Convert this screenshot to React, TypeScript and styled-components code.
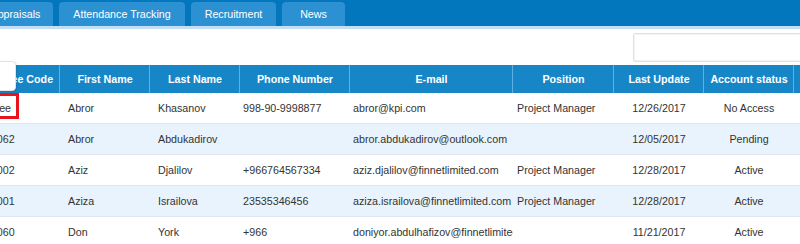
import styled, { createGlobalStyle } from 'styled-components'

const GlobalStyle = createGlobalStyle`
  html, body {
    margin: 0;
    padding: 0;
    background: #ffffff;
    overflow: hidden;
  }
  body {
    font-family: "Liberation Sans", Arial, sans-serif;
  }
`

type Column = {
  title: string
  width: number
  align: 'left' | 'center'
  pad: number
}

const columns: Column[] = [
  { title: 'Employee Code', width: 94, align: 'left', pad: 7 },
  { title: 'First Name', width: 90, align: 'left', pad: 8 },
  { title: 'Last Name', width: 90, align: 'left', pad: 8 },
  { title: 'Phone Number', width: 110, align: 'left', pad: 3 },
  { title: 'E-mail', width: 163, align: 'left', pad: 3 },
  { title: 'Position', width: 101, align: 'left', pad: 4 },
  { title: 'Last Update', width: 90, align: 'center', pad: 0 },
  { title: 'Account status', width: 90, align: 'center', pad: 0 },
  { title: '', width: 106, align: 'center', pad: 0 },
]

const rows = [
  ['Referee', 'Abror', 'Khasanov', '998-90-9998877', 'abror@kpi.com', 'Project Manager', '12/26/2017', 'No Access', ''],
  ['0000062', 'Abror', 'Abdukadirov', '', 'abror.abdukadirov@outlook.com', '', '12/05/2017', 'Pending', ''],
  ['0000002', 'Aziz', 'Djalilov', '+966764567334', 'aziz.djalilov@finnetlimited.com', 'Project Manager', '12/28/2017', 'Active', ''],
  ['0000001', 'Aziza', 'Israilova', '23535346456', 'aziza.israilova@finnetlimited.com', 'Project Manager', '12/28/2017', 'Active', ''],
  ['0000060', 'Don', 'York', '+966', 'doniyor.abdulhafizov@finnetlimited.com', '', '11/21/2017', 'Active', ''],
]

const tabs = [
  { label: 'Appraisals', width: 75 },
  { label: 'Attendance Tracking', width: 126 },
  { label: 'Recruitment', width: 85 },
  { label: 'News', width: 63 },
]

const App = () => {
  return (
    <>
      <GlobalStyle />
      <Viewport>
        <Canvas>
          <TopBar>
            {tabs.map((t) => (
              <Tab key={t.label} $width={t.width}>
                {t.label}
              </Tab>
            ))}
          </TopBar>
          <Toolbar>
            <Search type="text" />
          </Toolbar>
          <TableWrap>
            <Grid>
              <colgroup>
                {columns.map((c, i) => (
                  <col key={i} style={{ width: c.width }} />
                ))}
              </colgroup>
              <thead>
                <tr>
                  {columns.map((c, i) => (
                    <HeadCell key={i}>{c.title}</HeadCell>
                  ))}
                </tr>
              </thead>
              <tbody>
                {rows.map((r, ri) => (
                  <Row key={ri} $alt={ri % 2 === 1}>
                    {r.map((v, ci) => (
                      <Cell key={ci} $align={columns[ci].align} $pad={columns[ci].pad}>
                        {v}
                      </Cell>
                    ))}
                  </Row>
                ))}
              </tbody>
            </Grid>
            <Popover />
            <Highlight />
          </TableWrap>
        </Canvas>
      </Viewport>
    </>
  )
}

const Viewport = styled.div`
  width: 800px;
  height: 244px;
  overflow: hidden;
  position: relative;
`

const Canvas = styled.div`
  width: 900px;
  margin-left: -34px;
`

const TopBar = styled.div`
  display: flex;
  align-items: flex-end;
  gap: 6px;
  height: 26px;
  padding-left: 12px;
  background: #0277bd;
  border-bottom: 3px solid #c4def3;
`

const Tab = styled.div<{ $width: number }>`
  width: ${({ $width }) => $width}px;
  height: 24px;
  display: flex;
  align-items: center;
  justify-content: center;
  background: #2b91d3;
  border-radius: 4px 4px 0 0;
  color: #ffffff;
  font-size: 10.7px;
  white-space: nowrap;
`

const Toolbar = styled.div`
  display: flex;
  justify-content: flex-end;
  height: 36px;
  padding: 4px 33px 0 0;
  box-sizing: border-box;
`

const Search = styled.input`
  width: 200px;
  height: 29px;
  box-sizing: border-box;
  border: 1px solid #e2e2e2;
  border-radius: 2px;
  box-shadow: inset 0 0 0 1px #f4f4f4;
  outline: none;
  padding: 0 6px;
`

const TableWrap = styled.div`
  position: relative;
`

const Grid = styled.table`
  table-layout: fixed;
  border-collapse: collapse;
  width: 834px;
  font-size: 10.7px;
`

const HeadCell = styled.th`
  height: 28px;
  padding: 0;
  background: #1786c7;
  color: #ffffff;
  font-weight: bold;
  text-align: center;
  white-space: nowrap;
  overflow: hidden;
  box-shadow: inset -1px 0 0 #5fb0e2;
`

const Row = styled.tr<{ $alt: boolean }>`
  background: ${({ $alt }) => ($alt ? '#e8f3fd' : '#ffffff')};
  border-bottom: 1px solid #dfe6ee;
`

const Cell = styled.td<{ $align: 'left' | 'center'; $pad: number }>`
  height: 30px;
  padding: 0 0 0 ${({ $pad }) => $pad}px;
  text-align: ${({ $align }) => $align};
  color: #333333;
  white-space: nowrap;
  overflow: hidden;
`

const Popover = styled.div`
  position: absolute;
  left: 20px;
  top: -4px;
  width: 30px;
  height: 30px;
  box-sizing: border-box;
  background: #ffffff;
  border: 1px solid #e4e4e4;
  border-radius: 4px;
  box-shadow: 1px 1px 3px rgba(0, 0, 0, 0.12);
`

const Highlight = styled.div`
  position: absolute;
  left: 20px;
  top: 28px;
  width: 33px;
  height: 26px;
  box-sizing: border-box;
  border: 3px solid #e8141c;
`

export default App
